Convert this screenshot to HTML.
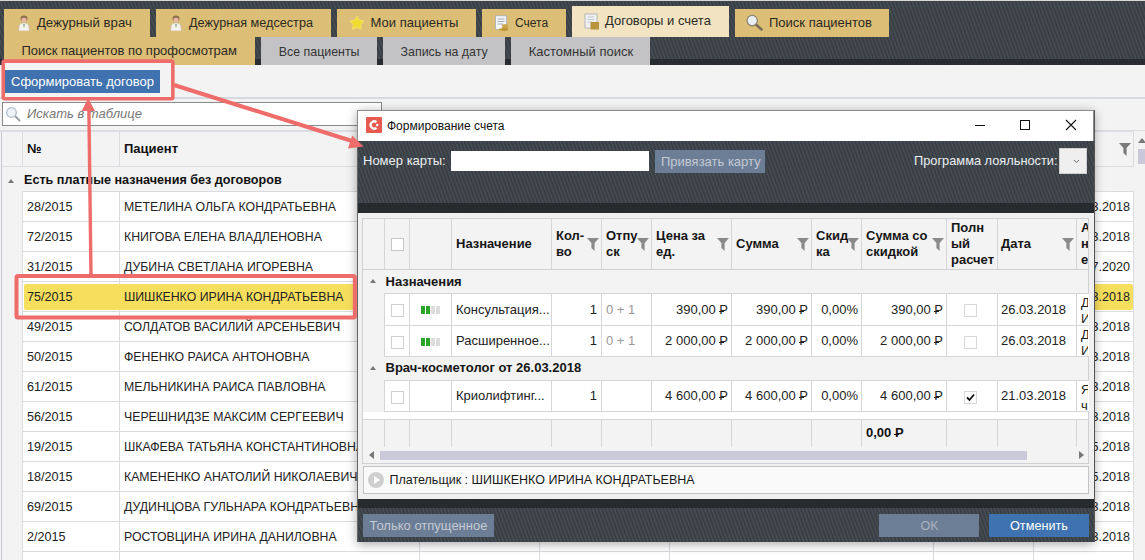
<!DOCTYPE html><html><head><meta charset='utf-8'><style>
*{margin:0;padding:0;box-sizing:border-box}
html,body{width:1145px;height:560px;overflow:hidden;background:#f3f3f3;font-family:"Liberation Sans", sans-serif;}
.a{position:absolute}
.t{position:absolute;white-space:nowrap;line-height:1}
.stripe{background:repeating-linear-gradient(70deg,#363c41 0px,#474e54 1.7px,#363c41 3.4px)}
.tab{position:absolute;background:#dcbe76}
.gtab{position:absolute;background:#c3c3c5}
.ttxt{position:absolute;white-space:nowrap;color:#2b2a22;font-size:13px;line-height:16px}
.row{position:absolute;left:22px;width:1112px;height:30px;background:#fff;border-bottom:1px solid #dcdce0}
.cd{position:absolute;top:0;bottom:0;width:1px;background:#dcdce0}
.ct{position:absolute;white-space:nowrap;font-size:12.6px;line-height:16px;color:#222}
</style></head><body>
<div class='a stripe' style='left:0;top:0;width:1145px;height:65px'></div>
<div class='a' style='left:0;top:0;width:1145px;height:1px;background:#d8d8d8'></div>
<div class='a' style='left:0;top:59px;width:1145px;height:6px;background:#23272a;opacity:0.8'></div>
<div class='tab' style='left:4px;top:9px;width:146px;height:28px'></div>
<div class='ttxt' style='left:36.9px;top:15px;font-size:13.2px'>Дежурный врач</div>
<div class='tab' style='left:156px;top:9px;width:175px;height:28px'></div>
<div class='ttxt' style='left:189px;top:15px;font-size:12.65px'>Дежурная медсестра</div>
<div class='tab' style='left:337px;top:9px;width:139px;height:28px'></div>
<div class='ttxt' style='left:370.6px;top:15px;font-size:13px'>Мои пациенты</div>
<div class='tab' style='left:482px;top:9px;width:84px;height:28px'></div>
<div class='ttxt' style='left:515px;top:15px;font-size:12px'>Счета</div>
<div class='tab' style='left:735px;top:9px;width:154px;height:28px'></div>
<div class='ttxt' style='left:769px;top:15px;font-size:13px'>Поиск пациентов</div>
<div class='a' style='left:572px;top:6px;width:157px;height:31px;background:#f2e3c2'></div>
<div class='ttxt' style='left:605px;top:13px'>Договоры и счета</div>
<div class='tab' style='left:4px;top:37px;width:251px;height:28px'></div>
<div class='ttxt' style='left:21.4px;top:43px'>Поиск пациентов по профосмотрам</div>
<div class='gtab' style='left:261px;top:37px;width:116px;height:28px'></div>
<div class='ttxt' style='left:278.75px;top:43.5px;color:#333;font-size:12.4px'>Все пациенты</div>
<div class='gtab' style='left:383px;top:37px;width:122px;height:28px'></div>
<div class='ttxt' style='left:400.6px;top:43.5px;color:#333;font-size:12.4px'>Запись на дату</div>
<div class='gtab' style='left:511px;top:37px;width:139px;height:28px'></div>
<div class='ttxt' style='left:528.75px;top:43.5px;color:#333;font-size:13px'>Кастомный поиск</div>
<div class='a' style='left:5px;top:70px;width:155px;height:23px;background:#3f72ae'></div>
<div class='t' style='left:11px;top:74px;font-size:13px;color:#fff;line-height:16px'>Сформировать договор</div>
<div class='a' style='left:0;top:97px;width:1145px;height:2px;background:#d6d9e0'></div>
<div class='a' style='left:2px;top:102px;width:380px;height:24px;background:#fff;border:1px solid #8a8a8a'></div>
<div class='t' style='left:27px;top:106px;font-size:13px;font-style:italic;color:#777;line-height:16px'>Искать в таблице</div>
<div class='a' style='left:1px;top:130px;width:1px;height:430px;background:#c8c8d0'></div>
<div class='a' style='left:2px;top:131px;width:1131px;height:36px;background:#f3f3f3;border-top:1px solid #dcdce0;border-bottom:1px solid #dcdce0'></div>
<div class='a' style='left:0;top:130px;width:1145px;height:2px;background:#dcdde2'></div>
<div class='a' style='left:22px;top:131px;width:1px;height:36px;background:#dcdce0'></div>
<div class='a' style='left:119px;top:131px;width:1px;height:36px;background:#dcdce0'></div>
<div class='a' style='left:1133px;top:131px;width:1px;height:36px;background:#dcdce0'></div>
<div class='t' style='left:27px;top:141px;font-size:13px;font-weight:bold;color:#111;line-height:16px'>№</div>
<div class='t' style='left:124px;top:141px;font-size:13px;font-weight:bold;color:#111;line-height:16px'>Пациент</div>
<div class='t' style='left:24px;top:172px;font-size:12.6px;font-weight:bold;color:#111;line-height:16px'>Есть платные назначения без договоров</div>
<div class='a' style='left:8px;top:179px;width:0;height:0;border-left:3.5px solid transparent;border-right:3.5px solid transparent;border-bottom:4px solid #777'></div>
<div class='a' style='left:22px;top:191px;width:1112px;height:30px;background:#fff;border-top:1px solid #dcdce0'>
<div class='cd' style='left:0px'></div>
<div class='cd' style='left:97px'></div>
<div class='cd' style='left:397px'></div>
<div class='cd' style='left:517px'></div>
<div class='cd' style='left:647px'></div>
<div class='cd' style='left:911px'></div>
<div class='cd' style='left:1011px'></div>
<div class='cd' style='left:1111px'></div>
<div class='ct' style='left:5px;top:7px'>28/2015</div>
<div class='ct' style='left:102px;top:7px;font-size:12.3px'>МЕТЕЛИНА ОЛЬГА КОНДРАТЬЕВНА</div>
<div class='ct' style='right:4px;top:7px'>23.2018</div>
</div>
<div class='a' style='left:22px;top:221px;width:1112px;height:30px;background:#fff;border-top:1px solid #dcdce0'>
<div class='cd' style='left:0px'></div>
<div class='cd' style='left:97px'></div>
<div class='cd' style='left:397px'></div>
<div class='cd' style='left:517px'></div>
<div class='cd' style='left:647px'></div>
<div class='cd' style='left:911px'></div>
<div class='cd' style='left:1011px'></div>
<div class='cd' style='left:1111px'></div>
<div class='ct' style='left:5px;top:7px'>72/2015</div>
<div class='ct' style='left:102px;top:7px;font-size:12.3px'>КНИГОВА ЕЛЕНА ВЛАДЛЕНОВНА</div>
<div class='ct' style='right:4px;top:7px'>23.2018</div>
</div>
<div class='a' style='left:22px;top:251px;width:1112px;height:30px;background:#fff;border-top:1px solid #dcdce0'>
<div class='cd' style='left:0px'></div>
<div class='cd' style='left:97px'></div>
<div class='cd' style='left:397px'></div>
<div class='cd' style='left:517px'></div>
<div class='cd' style='left:647px'></div>
<div class='cd' style='left:911px'></div>
<div class='cd' style='left:1011px'></div>
<div class='cd' style='left:1111px'></div>
<div class='ct' style='left:5px;top:7px'>31/2015</div>
<div class='ct' style='left:102px;top:7px;font-size:12.3px'>ДУБИНА СВЕТЛАНА ИГОРЕВНА</div>
<div class='ct' style='right:4px;top:7px'>27.2020</div>
</div>
<div class='a' style='left:22px;top:281px;width:1112px;height:30px;background:#fff;border-top:1px solid #dcdce0'>
<div class='cd' style='left:0px'></div>
<div class='cd' style='left:97px'></div>
<div class='cd' style='left:397px'></div>
<div class='cd' style='left:517px'></div>
<div class='cd' style='left:647px'></div>
<div class='cd' style='left:911px'></div>
<div class='cd' style='left:1011px'></div>
<div class='cd' style='left:1111px'></div>
<div class='a' style='left:2px;top:2px;width:1109px;height:26px;background:#f7df5e;border-radius:2px'></div>
<div class='ct' style='left:5px;top:7px'>75/2015</div>
<div class='ct' style='left:102px;top:7px;font-size:12.3px'>ШИШКЕНКО ИРИНА КОНДРАТЬЕВНА</div>
<div class='ct' style='right:4px;top:7px'>23.2018</div>
</div>
<div class='a' style='left:22px;top:311px;width:1112px;height:30px;background:#fff;border-top:1px solid #dcdce0'>
<div class='cd' style='left:0px'></div>
<div class='cd' style='left:97px'></div>
<div class='cd' style='left:397px'></div>
<div class='cd' style='left:517px'></div>
<div class='cd' style='left:647px'></div>
<div class='cd' style='left:911px'></div>
<div class='cd' style='left:1011px'></div>
<div class='cd' style='left:1111px'></div>
<div class='ct' style='left:5px;top:7px'>49/2015</div>
<div class='ct' style='left:102px;top:7px;font-size:12.3px'>СОЛДАТОВ ВАСИЛИЙ АРСЕНЬЕВИЧ</div>
<div class='ct' style='right:4px;top:7px'>23.2018</div>
</div>
<div class='a' style='left:22px;top:341px;width:1112px;height:30px;background:#fff;border-top:1px solid #dcdce0'>
<div class='cd' style='left:0px'></div>
<div class='cd' style='left:97px'></div>
<div class='cd' style='left:397px'></div>
<div class='cd' style='left:517px'></div>
<div class='cd' style='left:647px'></div>
<div class='cd' style='left:911px'></div>
<div class='cd' style='left:1011px'></div>
<div class='cd' style='left:1111px'></div>
<div class='ct' style='left:5px;top:7px'>50/2015</div>
<div class='ct' style='left:102px;top:7px;font-size:12.3px'>ФЕНЕНКО РАИСА АНТОНОВНА</div>
<div class='ct' style='right:4px;top:7px'>23.2018</div>
</div>
<div class='a' style='left:22px;top:371px;width:1112px;height:30px;background:#fff;border-top:1px solid #dcdce0'>
<div class='cd' style='left:0px'></div>
<div class='cd' style='left:97px'></div>
<div class='cd' style='left:397px'></div>
<div class='cd' style='left:517px'></div>
<div class='cd' style='left:647px'></div>
<div class='cd' style='left:911px'></div>
<div class='cd' style='left:1011px'></div>
<div class='cd' style='left:1111px'></div>
<div class='ct' style='left:5px;top:7px'>61/2015</div>
<div class='ct' style='left:102px;top:7px;font-size:12.3px'>МЕЛЬНИКИНА РАИСА ПАВЛОВНА</div>
<div class='ct' style='right:4px;top:7px'>23.2018</div>
</div>
<div class='a' style='left:22px;top:401px;width:1112px;height:30px;background:#fff;border-top:1px solid #dcdce0'>
<div class='cd' style='left:0px'></div>
<div class='cd' style='left:97px'></div>
<div class='cd' style='left:397px'></div>
<div class='cd' style='left:517px'></div>
<div class='cd' style='left:647px'></div>
<div class='cd' style='left:911px'></div>
<div class='cd' style='left:1011px'></div>
<div class='cd' style='left:1111px'></div>
<div class='ct' style='left:5px;top:7px'>56/2015</div>
<div class='ct' style='left:102px;top:7px;font-size:12.3px'>ЧЕРЕШНИДЗЕ МАКСИМ СЕРГЕЕВИЧ</div>
<div class='ct' style='right:4px;top:7px'>23.2018</div>
</div>
<div class='a' style='left:22px;top:431px;width:1112px;height:30px;background:#fff;border-top:1px solid #dcdce0'>
<div class='cd' style='left:0px'></div>
<div class='cd' style='left:97px'></div>
<div class='cd' style='left:397px'></div>
<div class='cd' style='left:517px'></div>
<div class='cd' style='left:647px'></div>
<div class='cd' style='left:911px'></div>
<div class='cd' style='left:1011px'></div>
<div class='cd' style='left:1111px'></div>
<div class='ct' style='left:5px;top:7px'>19/2015</div>
<div class='ct' style='left:102px;top:7px;font-size:12.3px'>ШКАФЕВА ТАТЬЯНА КОНСТАНТИНОВНА</div>
<div class='ct' style='right:4px;top:7px'>25.2018</div>
</div>
<div class='a' style='left:22px;top:461px;width:1112px;height:30px;background:#fff;border-top:1px solid #dcdce0'>
<div class='cd' style='left:0px'></div>
<div class='cd' style='left:97px'></div>
<div class='cd' style='left:397px'></div>
<div class='cd' style='left:517px'></div>
<div class='cd' style='left:647px'></div>
<div class='cd' style='left:911px'></div>
<div class='cd' style='left:1011px'></div>
<div class='cd' style='left:1111px'></div>
<div class='ct' style='left:5px;top:7px'>18/2015</div>
<div class='ct' style='left:102px;top:7px;font-size:12.3px'>КАМЕНЕНКО АНАТОЛИЙ НИКОЛАЕВИЧ</div>
<div class='ct' style='right:4px;top:7px'>25.2018</div>
</div>
<div class='a' style='left:22px;top:491px;width:1112px;height:30px;background:#fff;border-top:1px solid #dcdce0'>
<div class='cd' style='left:0px'></div>
<div class='cd' style='left:97px'></div>
<div class='cd' style='left:397px'></div>
<div class='cd' style='left:517px'></div>
<div class='cd' style='left:647px'></div>
<div class='cd' style='left:911px'></div>
<div class='cd' style='left:1011px'></div>
<div class='cd' style='left:1111px'></div>
<div class='ct' style='left:5px;top:7px'>69/2015</div>
<div class='ct' style='left:102px;top:7px;font-size:12.3px'>ДУДИНЦОВА ГУЛЬНАРА КОНДРАТЬЕВНА</div>
<div class='ct' style='right:4px;top:7px'>23.2018</div>
</div>
<div class='a' style='left:22px;top:521px;width:1112px;height:30px;background:#fff;border-top:1px solid #dcdce0'>
<div class='cd' style='left:0px'></div>
<div class='cd' style='left:97px'></div>
<div class='cd' style='left:397px'></div>
<div class='cd' style='left:517px'></div>
<div class='cd' style='left:647px'></div>
<div class='cd' style='left:911px'></div>
<div class='cd' style='left:1011px'></div>
<div class='cd' style='left:1111px'></div>
<div class='ct' style='left:5px;top:7px'>2/2015</div>
<div class='ct' style='left:102px;top:7px;font-size:12.3px'>РОСТОВЦИНА ИРИНА ДАНИЛОВНА</div>
<div class='ct' style='right:4px;top:7px'>23.2018</div>
</div>
<div class='a' style='left:22px;top:551px;width:1112px;height:30px;background:#fff;border-top:1px solid #dcdce0'>
<div class='cd' style='left:0px'></div>
<div class='cd' style='left:97px'></div>
<div class='cd' style='left:397px'></div>
<div class='cd' style='left:517px'></div>
<div class='cd' style='left:647px'></div>
<div class='cd' style='left:911px'></div>
<div class='cd' style='left:1011px'></div>
<div class='cd' style='left:1111px'></div>
<div class='ct' style='left:5px;top:7px'></div>
<div class='ct' style='left:102px;top:7px;font-size:12.3px'></div>
<div class='ct' style='right:4px;top:7px'>2</div>
</div>
<div class='a' style='left:357px;top:110px;width:737px;height:432px;box-shadow:0 2px 10px rgba(0,0,0,0.35)'></div>
<div class='a' style='left:357px;top:110px;width:737px;height:31px;background:#fff;border:1px solid #8c8c8c;border-bottom:none'></div>
<div class='a' style='left:366px;top:117px;width:16px;height:16px;background:#e85a50;border-radius:1px'></div>
<svg class='a' style='left:366px;top:117px' width='16' height='16' viewBox='0 0 16 16'><path d='M10.5 5.2 A3.6 3.6 0 1 0 10.5 10.8' stroke='#fff' stroke-width='2.2' fill='none'/><circle cx='11.2' cy='8' r='1.3' fill='#fff'/></svg>
<div class='t' style='left:387px;top:118px;font-size:12px;line-height:16px;color:#111'>Формирование счета</div>
<div class='a' style='left:975px;top:125px;width:10px;height:1px;background:#111'></div>
<div class='a' style='left:1020px;top:120px;width:10px;height:10px;border:1px solid #111'></div>
<svg class='a' style='left:1065px;top:119px' width='12' height='12' viewBox='0 0 12 12'><path d='M1 1 L11 11 M11 1 L1 11' stroke='#111' stroke-width='1.1'/></svg>
<div class='a stripe' style='left:357px;top:141px;width:737px;height:401px'></div>
<div class='a' style='left:357px;top:203px;width:737px;height:10px;background:#1f2326;opacity:0.75'></div>
<div class='t' style='left:363px;top:153px;font-size:13px;line-height:16px;color:#eceff2'>Номер карты:</div>
<div class='a' style='left:451px;top:151px;width:198px;height:20px;background:#fff'></div>
<div class='a' style='left:655px;top:150px;width:110px;height:23px;background:#6c7d96'></div>
<div class='t' style='left:661px;top:154px;font-size:13px;line-height:16px;color:#c3cad4'>Привязать карту</div>
<div class='t' style='left:914px;top:153px;font-size:12.8px;line-height:16px;color:#eceff2'>Программа лояльности:</div>
<div class='a' style='left:1059px;top:148px;width:28px;height:26px;background:#efefef;border:1px solid #d0d0d0'></div>
<svg class='a' style='left:1073px;top:159px' width='7' height='5' viewBox='0 0 7 5'><path d='M1 1 L3.5 3.5 L6 1' stroke='#666' stroke-width='1' fill='none'/></svg>
<div class='a' style='left:358px;top:213px;width:736px;height:286px;background:#f0f0f0'></div>
<div class='a' style='left:362px;top:218px;width:727px;height:246px;background:#f3f3f3;border:1px solid #d0d0d4'></div>
<div class='a' style='left:384.0px;top:219px;width:1px;height:50px;background:#d6d6da'></div>
<div class='a' style='left:409.0px;top:219px;width:1px;height:50px;background:#d6d6da'></div>
<div class='a' style='left:450.9px;top:219px;width:1px;height:50px;background:#d6d6da'></div>
<div class='a' style='left:551.1px;top:219px;width:1px;height:50px;background:#d6d6da'></div>
<div class='a' style='left:600.9px;top:219px;width:1px;height:50px;background:#d6d6da'></div>
<div class='a' style='left:651.0px;top:219px;width:1px;height:50px;background:#d6d6da'></div>
<div class='a' style='left:731.0px;top:219px;width:1px;height:50px;background:#d6d6da'></div>
<div class='a' style='left:811.0px;top:219px;width:1px;height:50px;background:#d6d6da'></div>
<div class='a' style='left:861.1px;top:219px;width:1px;height:50px;background:#d6d6da'></div>
<div class='a' style='left:946.1px;top:219px;width:1px;height:50px;background:#d6d6da'></div>
<div class='a' style='left:996.5px;top:219px;width:1px;height:50px;background:#d6d6da'></div>
<div class='a' style='left:1076.3px;top:219px;width:1px;height:50px;background:#d6d6da'></div>
<div class='a' style='left:363px;top:269px;width:725px;height:1px;background:#d0d0d4'></div>
<div class='a' style='left:391px;top:238px;width:13px;height:13px;background:#fff;border:1px solid #c8c8c8'></div>
<div class='t' style='left:456px;top:236px;font-size:13px;font-weight:bold;color:#161616;line-height:16px'>Назначение</div>
<div class='t' style='left:556px;top:228px;font-size:13px;font-weight:bold;color:#161616;line-height:16px;white-space:pre'>Кол-
во</div>
<div class='t' style='left:606px;top:228px;font-size:13px;font-weight:bold;color:#161616;line-height:16px;white-space:pre'>Отпу
ск</div>
<div class='t' style='left:656px;top:228px;font-size:13px;font-weight:bold;color:#161616;line-height:16px;white-space:pre'>Цена за
ед.</div>
<div class='t' style='left:736px;top:236px;font-size:13px;font-weight:bold;color:#161616;line-height:16px'>Сумма</div>
<div class='t' style='left:816px;top:228px;font-size:13px;font-weight:bold;color:#161616;line-height:16px;white-space:pre'>Скид
ка</div>
<div class='t' style='left:866px;top:228px;font-size:13px;font-weight:bold;color:#161616;line-height:16px;white-space:pre'>Сумма со
скидкой</div>
<div class='t' style='left:951px;top:220px;font-size:13px;font-weight:bold;color:#161616;line-height:16px;white-space:pre'>Полн
ый
расчет</div>
<div class='t' style='left:1001px;top:236px;font-size:13px;font-weight:bold;color:#161616;line-height:16px'>Дата</div>
<div class='a' style='left:1077px;top:219px;width:11px;height:50px;overflow:hidden'><div class='t' style='left:4px;top:1px;font-size:13px;font-weight:bold;color:#161616;line-height:16px;white-space:pre'>А
н
е</div></div>
<svg class='a' style='left:587px;top:238px' width='12' height='13' viewBox='0 0 12 13'><path d='M0 0 H12 L7.6 5 V13 L4.4 10 V5 Z' fill='#8a8a8a'/></svg>
<svg class='a' style='left:637px;top:238px' width='12' height='13' viewBox='0 0 12 13'><path d='M0 0 H12 L7.6 5 V13 L4.4 10 V5 Z' fill='#8a8a8a'/></svg>
<svg class='a' style='left:717px;top:238px' width='12' height='13' viewBox='0 0 12 13'><path d='M0 0 H12 L7.6 5 V13 L4.4 10 V5 Z' fill='#8a8a8a'/></svg>
<svg class='a' style='left:797px;top:238px' width='12' height='13' viewBox='0 0 12 13'><path d='M0 0 H12 L7.6 5 V13 L4.4 10 V5 Z' fill='#8a8a8a'/></svg>
<svg class='a' style='left:847px;top:238px' width='12' height='13' viewBox='0 0 12 13'><path d='M0 0 H12 L7.6 5 V13 L4.4 10 V5 Z' fill='#8a8a8a'/></svg>
<svg class='a' style='left:932px;top:238px' width='12' height='13' viewBox='0 0 12 13'><path d='M0 0 H12 L7.6 5 V13 L4.4 10 V5 Z' fill='#8a8a8a'/></svg>
<svg class='a' style='left:1062px;top:238px' width='12' height='13' viewBox='0 0 12 13'><path d='M0 0 H12 L7.6 5 V13 L4.4 10 V5 Z' fill='#8a8a8a'/></svg>
<div class='a' style='left:370px;top:279px;width:0;height:0;border-left:3.5px solid transparent;border-right:3.5px solid transparent;border-bottom:4px solid #777'></div>
<div class='t' style='left:385.5px;top:274px;font-size:13px;font-weight:bold;color:#161616;line-height:16px'>Назначения</div>
<div class='a' style='left:370px;top:366px;width:0;height:0;border-left:3.5px solid transparent;border-right:3.5px solid transparent;border-bottom:4px solid #777'></div>
<div class='t' style='left:385.5px;top:360px;font-size:13px;font-weight:bold;color:#161616;line-height:16px'>Врач-косметолог от 26.03.2018</div>
<div class='a' style='left:384px;top:293px;width:705px;height:33px;background:#fff;border-top:1px solid #d6d6da;border-bottom:1px solid #d6d6da'></div>
<div class='a' style='left:384.0px;top:293px;width:1px;height:32px;background:#d6d6da'></div>
<div class='a' style='left:409.0px;top:293px;width:1px;height:32px;background:#d6d6da'></div>
<div class='a' style='left:450.9px;top:293px;width:1px;height:32px;background:#d6d6da'></div>
<div class='a' style='left:551.1px;top:293px;width:1px;height:32px;background:#d6d6da'></div>
<div class='a' style='left:600.9px;top:293px;width:1px;height:32px;background:#d6d6da'></div>
<div class='a' style='left:651.0px;top:293px;width:1px;height:32px;background:#d6d6da'></div>
<div class='a' style='left:731.0px;top:293px;width:1px;height:32px;background:#d6d6da'></div>
<div class='a' style='left:811.0px;top:293px;width:1px;height:32px;background:#d6d6da'></div>
<div class='a' style='left:861.1px;top:293px;width:1px;height:32px;background:#d6d6da'></div>
<div class='a' style='left:946.1px;top:293px;width:1px;height:32px;background:#d6d6da'></div>
<div class='a' style='left:996.5px;top:293px;width:1px;height:32px;background:#d6d6da'></div>
<div class='a' style='left:1076.3px;top:293px;width:1px;height:32px;background:#d6d6da'></div>
<div class='a' style='left:391px;top:304.0px;width:13px;height:13px;background:#fff;border:1px solid #cfcfcf'></div>
<div class='a' style='left:421px;top:306.0px;width:4px;height:8px;background:#2aa52a'></div>
<div class='a' style='left:426px;top:306.0px;width:4px;height:8px;background:#2aa52a'></div>
<div class='a' style='left:431px;top:306.0px;width:4px;height:8px;background:#dcdcdc'></div>
<div class='a' style='left:436px;top:306.0px;width:4px;height:8px;background:#dcdcdc'></div>
<div class='t' style='left:456px;top:301.5px;font-size:13px;color:#222;line-height:16px'>Консультация...</div>
<div class='t' style='right:548px;top:301.5px;font-size:13px;color:#222;line-height:16px'>1</div>
<div class='t' style='left:606px;top:301.5px;font-size:13px;color:#222;line-height:16px;color:#999'>0 + 1</div>
<div class='t' style='right:417px;top:301.5px;font-size:13px;color:#222;line-height:16px'>390,00 <span style='position:relative;display:inline-block'>Р<span style='position:absolute;left:-0.5px;width:5px;top:9px;height:1px;background:currentColor'></span></span></div>
<div class='t' style='right:337px;top:301.5px;font-size:13px;color:#222;line-height:16px'>390,00 <span style='position:relative;display:inline-block'>Р<span style='position:absolute;left:-0.5px;width:5px;top:9px;height:1px;background:currentColor'></span></span></div>
<div class='t' style='right:287px;top:301.5px;font-size:13px;color:#222;line-height:16px'>0,00%</div>
<div class='t' style='right:202px;top:301.5px;font-size:13px;color:#222;line-height:16px'>390,00 <span style='position:relative;display:inline-block'>Р<span style='position:absolute;left:-0.5px;width:5px;top:9px;height:1px;background:currentColor'></span></span></div>
<div class='a' style='left:964px;top:304.0px;width:13px;height:13px;background:#fff;border:1px solid #d8d8d8'></div>
<div class='t' style='left:1001px;top:301.5px;font-size:13px;color:#222;line-height:16px'>26.03.2018</div>
<div class='a' style='left:1077px;top:293px;width:11px;height:32px;overflow:hidden'><div class='t' style='left:4px;top:2.0px;font-size:13px;color:#222;line-height:16px;white-space:pre'>Д
И</div></div>
<div class='a' style='left:384px;top:325px;width:705px;height:32px;background:#fff;border-top:1px solid #d6d6da;border-bottom:1px solid #d6d6da'></div>
<div class='a' style='left:384.0px;top:325px;width:1px;height:31px;background:#d6d6da'></div>
<div class='a' style='left:409.0px;top:325px;width:1px;height:31px;background:#d6d6da'></div>
<div class='a' style='left:450.9px;top:325px;width:1px;height:31px;background:#d6d6da'></div>
<div class='a' style='left:551.1px;top:325px;width:1px;height:31px;background:#d6d6da'></div>
<div class='a' style='left:600.9px;top:325px;width:1px;height:31px;background:#d6d6da'></div>
<div class='a' style='left:651.0px;top:325px;width:1px;height:31px;background:#d6d6da'></div>
<div class='a' style='left:731.0px;top:325px;width:1px;height:31px;background:#d6d6da'></div>
<div class='a' style='left:811.0px;top:325px;width:1px;height:31px;background:#d6d6da'></div>
<div class='a' style='left:861.1px;top:325px;width:1px;height:31px;background:#d6d6da'></div>
<div class='a' style='left:946.1px;top:325px;width:1px;height:31px;background:#d6d6da'></div>
<div class='a' style='left:996.5px;top:325px;width:1px;height:31px;background:#d6d6da'></div>
<div class='a' style='left:1076.3px;top:325px;width:1px;height:31px;background:#d6d6da'></div>
<div class='a' style='left:391px;top:335.5px;width:13px;height:13px;background:#fff;border:1px solid #cfcfcf'></div>
<div class='a' style='left:421px;top:337.5px;width:4px;height:8px;background:#2aa52a'></div>
<div class='a' style='left:426px;top:337.5px;width:4px;height:8px;background:#2aa52a'></div>
<div class='a' style='left:431px;top:337.5px;width:4px;height:8px;background:#dcdcdc'></div>
<div class='a' style='left:436px;top:337.5px;width:4px;height:8px;background:#dcdcdc'></div>
<div class='t' style='left:456px;top:333.0px;font-size:13px;color:#222;line-height:16px'>Расширенное...</div>
<div class='t' style='right:548px;top:333.0px;font-size:13px;color:#222;line-height:16px'>1</div>
<div class='t' style='left:606px;top:333.0px;font-size:13px;color:#222;line-height:16px;color:#999'>0 + 1</div>
<div class='t' style='right:417px;top:333.0px;font-size:13px;color:#222;line-height:16px'>2 000,00 <span style='position:relative;display:inline-block'>Р<span style='position:absolute;left:-0.5px;width:5px;top:9px;height:1px;background:currentColor'></span></span></div>
<div class='t' style='right:337px;top:333.0px;font-size:13px;color:#222;line-height:16px'>2 000,00 <span style='position:relative;display:inline-block'>Р<span style='position:absolute;left:-0.5px;width:5px;top:9px;height:1px;background:currentColor'></span></span></div>
<div class='t' style='right:287px;top:333.0px;font-size:13px;color:#222;line-height:16px'>0,00%</div>
<div class='t' style='right:202px;top:333.0px;font-size:13px;color:#222;line-height:16px'>2 000,00 <span style='position:relative;display:inline-block'>Р<span style='position:absolute;left:-0.5px;width:5px;top:9px;height:1px;background:currentColor'></span></span></div>
<div class='a' style='left:964px;top:335.5px;width:13px;height:13px;background:#fff;border:1px solid #d8d8d8'></div>
<div class='t' style='left:1001px;top:333.0px;font-size:13px;color:#222;line-height:16px'>26.03.2018</div>
<div class='a' style='left:1077px;top:325px;width:11px;height:31px;overflow:hidden'><div class='t' style='left:4px;top:1.5px;font-size:13px;color:#222;line-height:16px;white-space:pre'>Д
И</div></div>
<div class='a' style='left:384px;top:380px;width:705px;height:32px;background:#fff;border-top:1px solid #d6d6da;border-bottom:1px solid #d6d6da'></div>
<div class='a' style='left:384.0px;top:380px;width:1px;height:31px;background:#d6d6da'></div>
<div class='a' style='left:409.0px;top:380px;width:1px;height:31px;background:#d6d6da'></div>
<div class='a' style='left:450.9px;top:380px;width:1px;height:31px;background:#d6d6da'></div>
<div class='a' style='left:551.1px;top:380px;width:1px;height:31px;background:#d6d6da'></div>
<div class='a' style='left:600.9px;top:380px;width:1px;height:31px;background:#d6d6da'></div>
<div class='a' style='left:651.0px;top:380px;width:1px;height:31px;background:#d6d6da'></div>
<div class='a' style='left:731.0px;top:380px;width:1px;height:31px;background:#d6d6da'></div>
<div class='a' style='left:811.0px;top:380px;width:1px;height:31px;background:#d6d6da'></div>
<div class='a' style='left:861.1px;top:380px;width:1px;height:31px;background:#d6d6da'></div>
<div class='a' style='left:946.1px;top:380px;width:1px;height:31px;background:#d6d6da'></div>
<div class='a' style='left:996.5px;top:380px;width:1px;height:31px;background:#d6d6da'></div>
<div class='a' style='left:1076.3px;top:380px;width:1px;height:31px;background:#d6d6da'></div>
<div class='a' style='left:391px;top:390.5px;width:13px;height:13px;background:#fff;border:1px solid #cfcfcf'></div>
<div class='t' style='left:456px;top:388.0px;font-size:13px;color:#222;line-height:16px'>Криолифтинг...</div>
<div class='t' style='right:548px;top:388.0px;font-size:13px;color:#222;line-height:16px'>1</div>
<div class='t' style='right:417px;top:388.0px;font-size:13px;color:#222;line-height:16px'>4 600,00 <span style='position:relative;display:inline-block'>Р<span style='position:absolute;left:-0.5px;width:5px;top:9px;height:1px;background:currentColor'></span></span></div>
<div class='t' style='right:337px;top:388.0px;font-size:13px;color:#222;line-height:16px'>4 600,00 <span style='position:relative;display:inline-block'>Р<span style='position:absolute;left:-0.5px;width:5px;top:9px;height:1px;background:currentColor'></span></span></div>
<div class='t' style='right:287px;top:388.0px;font-size:13px;color:#222;line-height:16px'>0,00%</div>
<div class='t' style='right:202px;top:388.0px;font-size:13px;color:#222;line-height:16px'>4 600,00 <span style='position:relative;display:inline-block'>Р<span style='position:absolute;left:-0.5px;width:5px;top:9px;height:1px;background:currentColor'></span></span></div>
<div class='a' style='left:964px;top:390.5px;width:13px;height:13px;background:#fff;border:1px solid #d8d8d8'></div>
<svg class='a' style='left:966px;top:392.5px' width='9' height='9' viewBox='0 0 9 9'><path d='M1 4.5 L3.5 7 L8 1.5' stroke='#111' stroke-width='1.8' fill='none'/></svg>
<div class='t' style='left:1001px;top:388.0px;font-size:13px;color:#222;line-height:16px'>21.03.2018</div>
<div class='a' style='left:1077px;top:380px;width:11px;height:31px;overflow:hidden'><div class='t' style='left:4px;top:1.5px;font-size:13px;color:#222;line-height:16px;white-space:pre'>Я
ч</div></div>
<div class='a' style='left:363px;top:412px;width:725px;height:7px;background:#fff'></div>
<div class='a' style='left:363px;top:419px;width:725px;height:1px;background:#d6d6da'></div>
<div class='a' style='left:384.0px;top:420px;width:1px;height:27px;background:#d6d6da'></div>
<div class='a' style='left:409.0px;top:420px;width:1px;height:27px;background:#d6d6da'></div>
<div class='a' style='left:450.9px;top:420px;width:1px;height:27px;background:#d6d6da'></div>
<div class='a' style='left:551.1px;top:420px;width:1px;height:27px;background:#d6d6da'></div>
<div class='a' style='left:600.9px;top:420px;width:1px;height:27px;background:#d6d6da'></div>
<div class='a' style='left:651.0px;top:420px;width:1px;height:27px;background:#d6d6da'></div>
<div class='a' style='left:731.0px;top:420px;width:1px;height:27px;background:#d6d6da'></div>
<div class='a' style='left:811.0px;top:420px;width:1px;height:27px;background:#d6d6da'></div>
<div class='a' style='left:861.1px;top:420px;width:1px;height:27px;background:#d6d6da'></div>
<div class='a' style='left:946.1px;top:420px;width:1px;height:27px;background:#d6d6da'></div>
<div class='a' style='left:996.5px;top:420px;width:1px;height:27px;background:#d6d6da'></div>
<div class='a' style='left:1076.3px;top:420px;width:1px;height:27px;background:#d6d6da'></div>
<div class='t' style='left:866px;top:425px;font-size:13px;font-weight:bold;color:#111;line-height:16px'>0,00 <span style='position:relative;display:inline-block'>Р<span style='position:absolute;left:-0.5px;width:5px;top:9px;height:1px;background:currentColor'></span></span></div>
<div class='a' style='left:369px;top:451px;width:0;height:0;border-top:4px solid transparent;border-bottom:4px solid transparent;border-right:5px solid #777'></div>
<div class='a' style='left:380px;top:451px;width:647px;height:9px;background:#c9c9d9'></div>
<div class='a' style='left:1079px;top:451px;width:0;height:0;border-top:4px solid transparent;border-bottom:4px solid transparent;border-left:5px solid #777'></div>
<div class='a' style='left:363px;top:466px;width:726px;height:28px;background:#fafafa;border:1px solid #c4c4c4'></div>
<div class='a' style='left:368px;top:472px;width:16px;height:16px;border-radius:50%;background:#cfcfcf'></div>
<div class='a' style='left:374px;top:476px;width:0;height:0;border-top:4px solid transparent;border-bottom:4px solid transparent;border-left:6px solid #fff'></div>
<div class='t' style='left:389.5px;top:472px;font-size:12.5px;color:#1a1a1a;line-height:16px'>Плательщик : ШИШКЕНКО ИРИНА КОНДРАТЬЕВНА</div>
<div class='a' style='left:357px;top:499px;width:737px;height:9px;background:#1f2326;opacity:0.75'></div>
<div class='a' style='left:363px;top:514px;width:131px;height:23px;background:#6c7d96'></div>
<div class='t' style='left:369.5px;top:518px;font-size:13px;color:#c3cad4;line-height:16px'>Только отпущенное</div>
<div class='a' style='left:879px;top:514px;width:100px;height:23px;background:#6c7d96'></div>
<div class='t' style='left:920.5px;top:518px;font-size:12.5px;color:#aab3c0;line-height:16px'>OK</div>
<div class='a' style='left:989px;top:514px;width:100px;height:23px;background:#3e72b0'></div>
<div class='t' style='left:1010px;top:518px;font-size:12.7px;color:#fff;line-height:16px'>Отменить</div>
<svg class='a' style='left:18px;top:15px' width='12' height='16' viewBox='0 0 12 16'><ellipse cx='6' cy='3.6' rx='3.4' ry='3.2' fill='#8a6a4a'/><ellipse cx='6' cy='5' rx='2.6' ry='2.6' fill='#e8b8a0'/><path d='M0.5 16 L1.2 10.5 Q2 8.2 4.5 8 L7.5 8 Q10 8.2 10.8 10.5 L11.5 16 Z' fill='#f4f2ea' stroke='#b8b4a0' stroke-width='0.6'/><path d='M5.3 9 L6 13 L6.7 9 Z' fill='#5a7a78'/></svg>
<svg class='a' style='left:170px;top:15px' width='12' height='16' viewBox='0 0 12 16'><ellipse cx='6' cy='3.6' rx='3.4' ry='3.2' fill='#8a6a4a'/><ellipse cx='6' cy='5' rx='2.6' ry='2.6' fill='#e8b8a0'/><path d='M0.5 16 L1.2 10.5 Q2 8.2 4.5 8 L7.5 8 Q10 8.2 10.8 10.5 L11.5 16 Z' fill='#f4f2ea' stroke='#b8b4a0' stroke-width='0.6'/><path d='M5.3 9 L6 13 L6.7 9 Z' fill='#5a7a78'/></svg>
<svg class='a' style='left:350px;top:16px' width='14' height='14' viewBox='0 0 14 14'><path d='M7.00 0.20 L9.41 4.08 L13.85 5.18 L10.90 8.67 L11.23 13.22 L7.00 11.50 L2.77 13.22 L3.10 8.67 L0.15 5.18 L4.59 4.08 Z' fill='#f0dc30' stroke='#f4e070' stroke-width='1' stroke-linejoin='round'/></svg>
<svg class='a' style='left:494px;top:15px' width='15' height='16' viewBox='0 0 15 16'><rect x='1.5' y='0.8' width='11' height='13.5' fill='#f4f6f8' stroke='#a8aeb4' stroke-width='0.8'/><path d='M3.5 4 H10.5 M3.5 6.5 H10.5 M3.5 9 H9' stroke='#8a9aa8' stroke-width='0.8'/><ellipse cx='11' cy='10.5' rx='3.2' ry='1.2' fill='#c9a040'/><ellipse cx='11' cy='12.5' rx='3.2' ry='1.2' fill='#c9a040'/><ellipse cx='8' cy='14.5' rx='3.2' ry='1.2' fill='#c9a040'/><ellipse cx='11' cy='14.5' rx='3.2' ry='1.2' fill='#b89030'/></svg>
<svg class='a' style='left:584px;top:13px' width='16' height='17' viewBox='0 0 16 17'><rect x='1' y='1' width='12' height='14' fill='#eef0f2' stroke='#a9acb0' stroke-width='0.8'/><path d='M3.5 4 H10 M3.5 6.5 H10 M3.5 9 H8' stroke='#b8c0c8' stroke-width='0.8'/><rect x='6.5' y='9' width='8.5' height='7.5' fill='#b8943c'/></svg>
<svg class='a' style='left:745px;top:14px' width='18' height='17' viewBox='0 0 18 17'><line x1='11' y1='10.5' x2='16.5' y2='15.5' stroke='#7a6a5a' stroke-width='2.4' stroke-linecap='round'/><circle cx='7.2' cy='6.6' r='5.2' fill='#e8eef2' stroke='#8a8070' stroke-width='1.2'/></svg>
<svg class='a' style='left:5px;top:106px' width='16' height='16' viewBox='0 0 16 16'><line x1='10' y1='10' x2='14.5' y2='14.5' stroke='#9aa2aa' stroke-width='2' stroke-linecap='round'/><circle cx='6.5' cy='6.5' r='4.8' fill='#eef3f8' stroke='#b0bcc8' stroke-width='1.2'/></svg>
<svg class='a' style='left:1119px;top:143px' width='12' height='13' viewBox='0 0 12 13'><path d='M0 0 H12 L7.6 5 V13 L4.4 10 V5 Z' fill='#7a7a7a'/></svg>
<div class='a' style='left:1134px;top:131px;width:11px;height:429px;background:#f3f3f3'></div>
<div class='a' style='left:1138px;top:138px;width:0;height:0;border-left:4px solid transparent;border-right:4px solid transparent;border-bottom:5px solid #777'></div>
<div class='a' style='left:1138px;top:149px;width:7px;height:15px;background:#c9c9d9'></div>
<div class='a' style='left:1094px;top:110px;width:1px;height:432px;background:#555'></div>
<div class='a' style='left:357px;top:141px;width:1px;height:401px;background:#666'></div>
<div class='a' style='left:5px;top:62px;width:166px;height:3px;background:#f3f3f3'></div>
<svg class='a' style='left:0;top:0' width='1145' height='560' viewBox='0 0 1145 560'>
<rect x='3.25' y='61.1' width='169.6' height='37.6' rx='1.5' fill='none' stroke='#ee6d6a' stroke-width='3.6'/>
<rect x='16.5' y='276' width='338.4' height='41.5' rx='1.5' fill='none' stroke='#ee6d6a' stroke-width='4'/>
<path d='M91 276 L88.9 110' stroke='#ee6d6a' stroke-width='3.4' fill='none'/>
<path d='M88.2 98 L95 111 L81.6 111 Z' fill='#ee6d6a'/>
<path d='M174 85 L352 141' stroke='#ee6d6a' stroke-width='4' fill='none'/>
<path d='M363.6 146.4 L352.2 135.4 L348 148.6 Z' fill='#ee6d6a'/>
</svg>
</body></html>
